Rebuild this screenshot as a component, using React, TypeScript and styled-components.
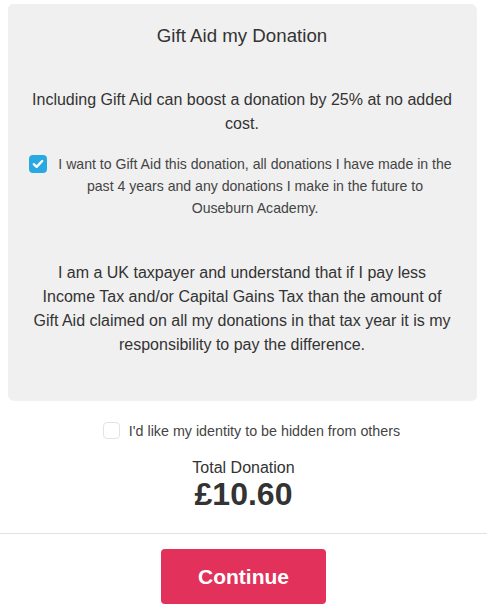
import React from "react";
import styled, { createGlobalStyle } from "styled-components";

const Global = createGlobalStyle`
  html, body { margin: 0; padding: 0; background: #fff; }
  body { font-family: "Liberation Sans", Arial, sans-serif; color: #333; }
`;

const Page = styled.div`
  display: flex;
  flex-direction: column;
  padding-top: 4px;
`;

const Panel = styled.section`
  margin: 0 11px 0 8px;
  background: #f0f0f0;
  border-radius: 5px;
  box-shadow: 1px 1px 1px rgba(0, 0, 0, 0.06);
  padding: 20px 22px 43px;
  display: flex;
  flex-direction: column;
  align-items: center;
  text-align: center;
`;

const Title = styled.h2`
  margin: 0;
  font-size: 18.7px;
  line-height: 24px;
  font-weight: normal;
  color: #333;
`;

const Para = styled.p<{ $top: number }>`
  margin: ${(p) => p.$top}px 0 0;
  font-size: 16px;
  line-height: 24px;
  color: #333;
`;

const ConsentRow = styled.label`
  margin: 17px -1px 0;
  display: flex;
  align-items: flex-start;
  gap: 8px;
  font-size: 14.1px;
  line-height: 22px;
  color: #444;
`;

const CheckBox = styled.span<{ $checked?: boolean; $size: number }>`
  flex: none;
  width: ${(p) => p.$size}px;
  height: ${(p) => p.$size}px;
  box-sizing: border-box;
  border-radius: 4px;
  display: flex;
  align-items: center;
  justify-content: center;
  background: ${(p) => (p.$checked ? "#29a9e1" : "#fff")};
  border: ${(p) => (p.$checked ? "none" : "1px solid #e3e3e3")};
`;

const ConsentText = styled.span`
  text-align: center;
`;

const HiddenRow = styled.label`
  margin: 21px 0 0 16px;
  display: flex;
  align-items: center;
  justify-content: center;
  gap: 9px;
  font-size: 14.3px;
  line-height: 17px;
  color: #444;
`;

const HiddenText = styled.span`
  padding-top: 2px;
`;

const TotalBlock = styled.div`
  margin-top: 19px;
  display: flex;
  flex-direction: column;
  align-items: center;
`;

const TotalLabel = styled.div`
  font-size: 16px;
  line-height: 18px;
  color: #333;
`;

const Amount = styled.div`
  font-size: 32px;
  line-height: 35px;
  font-weight: bold;
  color: #333;
`;

const Divider = styled.hr`
  margin: 21px 0 0;
  border: none;
  border-top: 1px solid #e2e2e2;
  height: 0;
`;

const Footer = styled.div`
  display: flex;
  justify-content: center;
  padding-top: 15px;
`;

const Button = styled.button`
  width: 165px;
  height: 55px;
  border: none;
  border-radius: 4px;
  background: #e2315a;
  color: #fff;
  font-family: "Liberation Sans", Arial, sans-serif;
  font-weight: bold;
  font-size: 21px;
  cursor: pointer;
`;

export default function App() {
  return (
    <>
      <Global />
      <Page>
        <Panel>
          <Title>Gift Aid my Donation</Title>
          <Para $top={40}>
            Including Gift Aid can boost a donation by 25% at no added cost.
          </Para>
          <ConsentRow>
            <CheckBox $checked $size={18} style={{ marginTop: 2 }}>
              <svg width="12" height="10" viewBox="0 0 12 10">
                <path
                  d="M1.8 5.2 L4.6 7.8 L10.2 2"
                  fill="none"
                  stroke="#fff"
                  strokeWidth="2.4"
                  strokeLinecap="round"
                  strokeLinejoin="round"
                />
              </svg>
            </CheckBox>
            <ConsentText>
              I want to Gift Aid this donation, all donations I have made in the
              past 4 years and any donations I make in the future to Ouseburn
              Academy.
            </ConsentText>
          </ConsentRow>
          <Para $top={42}>
            I am a UK taxpayer and understand that if I pay less Income Tax
            and/or Capital Gains Tax than the amount of Gift Aid claimed on all
            my donations in that tax year it is my responsibility to pay the
            difference.
          </Para>
        </Panel>
        <HiddenRow>
          <CheckBox $size={17} />
          <HiddenText>I'd like my identity to be hidden from others</HiddenText>
        </HiddenRow>
        <TotalBlock>
          <TotalLabel>Total Donation</TotalLabel>
          <Amount>£10.60</Amount>
        </TotalBlock>
        <Divider />
        <Footer>
          <Button>Continue</Button>
        </Footer>
      </Page>
    </>
  );
}
